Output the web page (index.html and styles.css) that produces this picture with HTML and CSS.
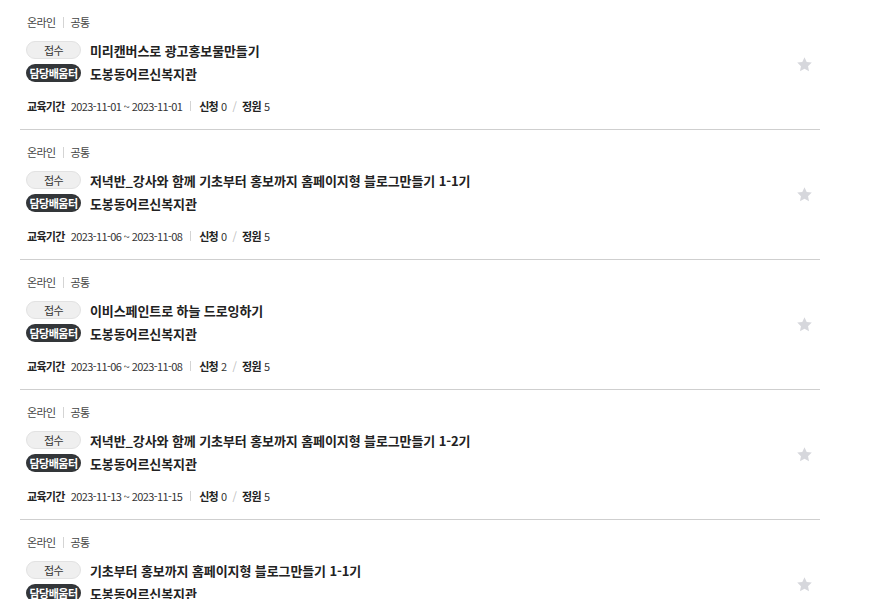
FILE: index.html
```html
<!DOCTYPE html>
<html lang="ko">
<head>
<meta charset="utf-8">
<title>교육 목록</title>
<link rel="stylesheet" href="styles.css">
</head>
<body>
<ul class="list">
  <li class="item">
    <div class="info">
      <p class="cat"><span>온라인</span><span class="sep"></span><span>공통</span></p>
      <div class="row"><span class="badge status">접수</span><strong class="title">미리캔버스로 광고홍보물만들기</strong></div>
      <div class="row"><span class="badge place">담당배움터</span><strong class="org">도봉동어르신복지관</strong></div>
      <p class="meta"><b>교육기간</b><span class="date">2023-11-01 ~ 2023-11-01</span><span class="sep"></span><b>신청</b><span class="num">0</span><span class="slash">/</span><b>정원</b><span class="num">5</span></p>
    </div>
    <button class="fav" type="button" aria-label="관심"><svg viewBox="0 0 24 24" width="17" height="17"><path d="M12 1.8l3.1 6.6 7.2.9-5.3 5 1.4 7.1L12 17.9l-6.4 3.5 1.4-7.1-5.3-5 7.2-.9z"/></svg></button>
  </li>
  <li class="item">
    <div class="info">
      <p class="cat"><span>온라인</span><span class="sep"></span><span>공통</span></p>
      <div class="row"><span class="badge status">접수</span><strong class="title">저녁반_강사와 함께 기초부터 홍보까지 홈페이지형 블로그만들기 1-1기</strong></div>
      <div class="row"><span class="badge place">담당배움터</span><strong class="org">도봉동어르신복지관</strong></div>
      <p class="meta"><b>교육기간</b><span class="date">2023-11-06 ~ 2023-11-08</span><span class="sep"></span><b>신청</b><span class="num">0</span><span class="slash">/</span><b>정원</b><span class="num">5</span></p>
    </div>
    <button class="fav" type="button" aria-label="관심"><svg viewBox="0 0 24 24" width="17" height="17"><path d="M12 1.8l3.1 6.6 7.2.9-5.3 5 1.4 7.1L12 17.9l-6.4 3.5 1.4-7.1-5.3-5 7.2-.9z"/></svg></button>
  </li>
  <li class="item">
    <div class="info">
      <p class="cat"><span>온라인</span><span class="sep"></span><span>공통</span></p>
      <div class="row"><span class="badge status">접수</span><strong class="title">이비스페인트로 하늘 드로잉하기</strong></div>
      <div class="row"><span class="badge place">담당배움터</span><strong class="org">도봉동어르신복지관</strong></div>
      <p class="meta"><b>교육기간</b><span class="date">2023-11-06 ~ 2023-11-08</span><span class="sep"></span><b>신청</b><span class="num">2</span><span class="slash">/</span><b>정원</b><span class="num">5</span></p>
    </div>
    <button class="fav" type="button" aria-label="관심"><svg viewBox="0 0 24 24" width="17" height="17"><path d="M12 1.8l3.1 6.6 7.2.9-5.3 5 1.4 7.1L12 17.9l-6.4 3.5 1.4-7.1-5.3-5 7.2-.9z"/></svg></button>
  </li>
  <li class="item">
    <div class="info">
      <p class="cat"><span>온라인</span><span class="sep"></span><span>공통</span></p>
      <div class="row"><span class="badge status">접수</span><strong class="title">저녁반_강사와 함께 기초부터 홍보까지 홈페이지형 블로그만들기 1-2기</strong></div>
      <div class="row"><span class="badge place">담당배움터</span><strong class="org">도봉동어르신복지관</strong></div>
      <p class="meta"><b>교육기간</b><span class="date">2023-11-13 ~ 2023-11-15</span><span class="sep"></span><b>신청</b><span class="num">0</span><span class="slash">/</span><b>정원</b><span class="num">5</span></p>
    </div>
    <button class="fav" type="button" aria-label="관심"><svg viewBox="0 0 24 24" width="17" height="17"><path d="M12 1.8l3.1 6.6 7.2.9-5.3 5 1.4 7.1L12 17.9l-6.4 3.5 1.4-7.1-5.3-5 7.2-.9z"/></svg></button>
  </li>
  <li class="item">
    <div class="info">
      <p class="cat"><span>온라인</span><span class="sep"></span><span>공통</span></p>
      <div class="row"><span class="badge status">접수</span><strong class="title">기초부터 홍보까지 홈페이지형 블로그만들기 1-1기</strong></div>
      <div class="row"><span class="badge place">담당배움터</span><strong class="org">도봉동어르신복지관</strong></div>
      <p class="meta"><b>교육기간</b><span class="date">2023-11-13 ~ 2023-11-15</span><span class="sep"></span><b>신청</b><span class="num">0</span><span class="slash">/</span><b>정원</b><span class="num">5</span></p>
    </div>
    <button class="fav" type="button" aria-label="관심"><svg viewBox="0 0 24 24" width="17" height="17"><path d="M12 1.8l3.1 6.6 7.2.9-5.3 5 1.4 7.1L12 17.9l-6.4 3.5 1.4-7.1-5.3-5 7.2-.9z"/></svg></button>
  </li>
</ul>
</body>
</html>
```
FILE: styles.css
```css
* { box-sizing: border-box; }
html, body {
  margin: 0;
  padding: 0;
  background: #fff;
  font-family: "Noto Sans CJK KR", "Noto Sans", sans-serif;
  color: #222;
}
.list {
  list-style: none;
  margin: 0;
  padding: 0 0 0 20px;
  width: 820px;
}
.item {
  display: flex;
  align-items: center;
  padding: 14px 0 15px 6px;
  border-bottom: 1px solid #cfcfcf;
}
.info {
  flex: 1;
  min-width: 0;
}
.cat {
  margin: 0;
  display: flex;
  align-items: center;
  font-size: 11px;
  line-height: 16px;
  color: #444;
  letter-spacing: -0.6px;
  padding-left: 1px;
}
.cat .sep {
  width: 1px;
  height: 11px;
  background: #d4d4d4;
  margin: 0 7px;
}
.row {
  display: flex;
  align-items: center;
  height: 18px;
  margin-top: 5px;
}
.cat + .row { margin-top: 11px; }
.badge {
  display: inline-flex;
  align-items: center;
  justify-content: center;
  width: 55px;
  height: 18px;
  border-radius: 9px;
  font-size: 11px;
  letter-spacing: -0.5px;
  flex: none;
  margin-right: 9px;
}
.status {
  background: #efefef;
  border: 1px solid #e2e2e2;
  color: #333;
}
.place {
  background: #333639;
  color: #fff;
  font-weight: 700;
}
.title, .org {
  font-size: 13px;
  font-weight: 700;
  color: #222;
  letter-spacing: -0.1px;
  white-space: nowrap;
}
.meta {
  margin: 16px 0 0;
  display: flex;
  align-items: center;
  font-size: 11px;
  line-height: 16px;
  color: #333;
  letter-spacing: -0.7px;
  padding-left: 1px;
}
.meta b { font-weight: 700; color: #222; }
.meta .date { margin-left: 6px; letter-spacing: -0.6px; }
.meta .sep {
  width: 1px;
  height: 10px;
  background: #d4d4d4;
  margin: 0 8px;
}
.meta .num { margin-left: 3px; }
.meta .slash { color: #bbb; margin: 0 6px; }
.fav {
  flex: none;
  width: 17px;
  height: 17px;
  margin-right: 7px;
  padding: 0;
  border: 0;
  background: none;
  display: flex;
  align-items: center;
  justify-content: center;
}
.fav svg { fill: #d6d7dc; display: block; }
```
